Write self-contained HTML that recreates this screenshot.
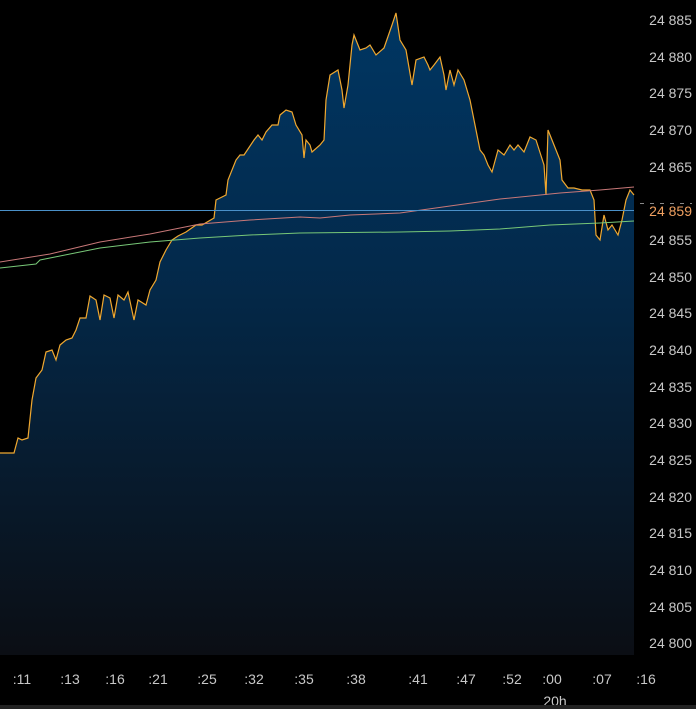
<!DOCTYPE html>
<html><head><meta charset="utf-8"><style>
html,body{margin:0;padding:0;background:#000;width:696px;height:709px;overflow:hidden}
svg text{font-family:"Liberation Sans",sans-serif;font-size:14px;fill:#c8c8c8}
</style></head><body>
<svg width="696" height="709" viewBox="0 0 696 709" xmlns="http://www.w3.org/2000/svg">
<defs>
<linearGradient id="g" gradientUnits="userSpaceOnUse" x1="0" y1="0" x2="0" y2="655">
<stop offset="0" stop-color="#003764"/>
<stop offset="0.4" stop-color="#032a4c"/>
<stop offset="1" stop-color="#0b0e14"/>
</linearGradient>
</defs>
<rect x="0" y="0" width="696" height="709" fill="#000"/>
<polygon fill="url(#g)" points="0,655 0,453 14,453 18,438 22,440 28,438 32,400 36,378 42,370 46,352 52,350 56,360 60,345 66,340 72,338 76,330 80,318 86,318 90,296 96,300 100,320 104,295 110,298 114,318 118,295 124,300 128,292 134,320 138,300 146,305 150,290 156,280 160,262 166,250 172,240 178,236 186,232 196,225 202,225 214,218 216,200 226,195 228,180 236,160 240,155 244,155 254,140 258,135 262,140 266,132 272,125 278,125 280,115 286,110 292,112 296,125 302,135 304,158 306,140 310,145 312,152 320,145 324,140 326,100 330,75 338,70 342,90 344,108 348,85 352,45 354,35 360,50 366,48 370,45 376,55 384,48 392,25 396,13 400,40 406,50 412,85 416,60 424,57 428,65 430,70 434,65 440,57 444,75 446,90 450,70 454,85 458,70 464,80 470,100 476,130 480,150 484,155 488,165 492,172 498,150 504,155 510,145 514,150 518,145 524,152 530,137 536,140 544,165 546,195 548,130 556,150 560,160 562,180 568,188 574,188 582,190 590,190 594,200 596,235 600,240 604,215 608,230 612,225 618,235 622,220 626,200 630,190 634,195 634,655"/>
<polyline fill="none" stroke="#f0a830" stroke-width="1.2" points="0,453 14,453 18,438 22,440 28,438 32,400 36,378 42,370 46,352 52,350 56,360 60,345 66,340 72,338 76,330 80,318 86,318 90,296 96,300 100,320 104,295 110,298 114,318 118,295 124,300 128,292 134,320 138,300 146,305 150,290 156,280 160,262 166,250 172,240 178,236 186,232 196,225 202,225 214,218 216,200 226,195 228,180 236,160 240,155 244,155 254,140 258,135 262,140 266,132 272,125 278,125 280,115 286,110 292,112 296,125 302,135 304,158 306,140 310,145 312,152 320,145 324,140 326,100 330,75 338,70 342,90 344,108 348,85 352,45 354,35 360,50 366,48 370,45 376,55 384,48 392,25 396,13 400,40 406,50 412,85 416,60 424,57 428,65 430,70 434,65 440,57 444,75 446,90 450,70 454,85 458,70 464,80 470,100 476,130 480,150 484,155 488,165 492,172 498,150 504,155 510,145 514,150 518,145 524,152 530,137 536,140 544,165 546,195 548,130 556,150 560,160 562,180 568,188 574,188 582,190 590,190 594,200 596,235 600,240 604,215 608,230 612,225 618,235 622,220 626,200 630,190 634,195"/>
<polyline fill="none" stroke="#c87878" stroke-width="1" points="0,262 50,254 100,242 150,234 200,224 250,220 300,217 320,218 350,215 400,213 450,206 500,199 560,193 600,190 634,187"/>
<polyline fill="none" stroke="#78c878" stroke-width="1" points="0,268 36,264 40,260 100,248 150,242 200,238 250,235 300,233 400,232 450,231 500,229 550,225 600,223 634,221"/>
<line x1="0" y1="210.5" x2="634" y2="210.5" stroke="#4a90c8" stroke-width="1"/>
<g text-anchor="end">
<text x="692" y="25">24 885</text>
<text x="692" y="62">24 880</text>
<text x="692" y="98">24 875</text>
<text x="692" y="135">24 870</text>
<text x="692" y="172">24 865</text>
<text x="692" y="216" style="fill:#f0a060">24 859</text>
<text x="692" y="245">24 855</text>
<text x="692" y="282">24 850</text>
<text x="692" y="318">24 845</text>
<text x="692" y="355">24 840</text>
<text x="692" y="392">24 835</text>
<text x="692" y="428">24 830</text>
<text x="692" y="465">24 825</text>
<text x="692" y="502">24 820</text>
<text x="692" y="538">24 815</text>
<text x="692" y="575">24 810</text>
<text x="692" y="612">24 805</text>
<text x="692" y="648">24 800</text>
</g>
<line x1="640" y1="203.5" x2="692" y2="203.5" stroke="#888" stroke-dasharray="4,6"/>
<g text-anchor="middle">
<text x="22" y="684">:11</text>
<text x="70" y="684">:13</text>
<text x="115" y="684">:16</text>
<text x="158" y="684">:21</text>
<text x="207" y="684">:25</text>
<text x="254" y="684">:32</text>
<text x="304" y="684">:35</text>
<text x="356" y="684">:38</text>
<text x="418" y="684">:41</text>
<text x="466" y="684">:47</text>
<text x="512" y="684">:52</text>
<text x="552" y="684">:00</text>
<text x="602" y="684">:07</text>
<text x="646" y="684">:16</text>
<text x="555" y="706">20h</text>
</g>
<rect x="0" y="705" width="696" height="4" fill="#222"/>
</svg>
</body></html>
